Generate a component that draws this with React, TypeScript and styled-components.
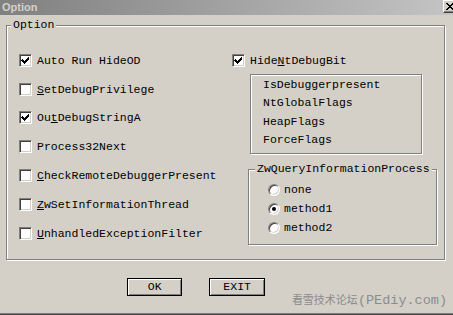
import React from "react";
import styled, { createGlobalStyle } from "styled-components";

const Global = createGlobalStyle`
  html, body { margin: 0; padding: 0; background: #d4d0c8; overflow: hidden; }
  #root { width: 453px; height: 315px; }
`;

const Window = styled.div`
  width: 453px;
  height: 315px;
  box-sizing: border-box;
  background: #d4d0c8;
  display: flex;
  flex-direction: column;
  overflow: hidden;
  border-bottom: 1px solid #404040;
  box-shadow: inset 0 -1px 0 #808080;
  font-family: "Liberation Mono", monospace;
  font-size: 11.5px;
  color: #000;
`;

const TitleBar = styled.div`
  height: 15px;
  flex: none;
  display: flex;
  align-items: flex-start;
  justify-content: space-between;
  background: linear-gradient(to right, #808080, #c4c4c4);
  padding-left: 2px;
  overflow: hidden;
`;

const TitleText = styled.span`
  font-family: "Liberation Sans", Arial, sans-serif;
  font-weight: bold;
  font-size: 11px;
  line-height: 14px;
  color: #d4d0c8;
`;

const CloseButton = styled.div`
  width: 14px;
  height: 13px;
  margin-right: -4px;
  box-sizing: border-box;
  background: #d4d0c8;
  border-top: 1px solid #fff;
  border-left: 1px solid #fff;
  border-right: 1px solid #404040;
  border-bottom: 1px solid #404040;
  box-shadow: inset -1px -1px 0 #808080;
  display: flex;
  align-items: center;
  justify-content: center;
`;

const Body = styled.div`
  flex: 1;
  display: flex;
  flex-direction: column;
  padding: 10px 0 0 6px;
`;

const GroupBox = styled.div<{ $w: number; $h: number }>`
  position: relative;
  box-sizing: border-box;
  width: ${(p) => p.$w}px;
  height: ${(p) => p.$h}px;
  border: 1px solid #808080;
  box-shadow: inset 1px 1px 0 #fff, 1px 1px 0 #fff;
`;

const GroupLabel = styled.span<{ $left: number }>`
  position: absolute;
  top: -8px;
  left: ${(p) => p.$left}px;
  padding: 0 2px;
  line-height: 13px;
  background: #d4d0c8;
  white-space: nowrap;
`;

const MainGrid = styled.div`
  display: grid;
  grid-template-columns: 213px 1fr;
  padding: 20px 0 0 12px;
`;

const LeftCol = styled.div`
  display: grid;
  grid-auto-rows: 28.8px;
`;

const RightCol = styled.div`
  display: flex;
  flex-direction: column;
`;

const CheckRow = styled.div<{ $h?: number }>`
  display: flex;
  align-items: center;
  gap: 5px;
  height: ${(p) => (p.$h ? `${p.$h}px` : "auto")};
  white-space: nowrap;
  line-height: 13px;
`;

const Check = styled.div`
  width: 13px;
  height: 13px;
  flex: none;
  box-sizing: border-box;
  background: #fff;
  border: 1px solid;
  border-color: #808080 #fff #fff #808080;
  box-shadow: inset 1px 1px 0 #404040, inset -1px -1px 0 #d4d0c8;
  display: flex;
  align-items: center;
  justify-content: center;
`;

const Key = styled.u`
  text-decoration: underline;
  text-underline-offset: 1px;
`;

const ListBox = styled.div`
  box-sizing: border-box;
  width: 172px;
  height: 80px;
  margin-left: 18px;
  border: 1px solid #808080;
  box-shadow: inset 1px 1px 0 #fff, 1px 1px 0 #fff;
  padding: 1px 0 0 12px;
`;

const ListItem = styled.div`
  line-height: 18.3px;
  white-space: nowrap;
`;

const RadioRows = styled.div`
  padding: 10px 0 0 19px;
`;

const RadioRow = styled.div`
  display: flex;
  align-items: center;
  gap: 4px;
  height: 19px;
`;

const Radio = styled.div`
  width: 12px;
  height: 12px;
  flex: none;
  box-sizing: border-box;
  border-radius: 50%;
  background: #fff;
  border: 1px solid;
  border-color: #808080 #fff #fff #808080;
  box-shadow: inset 1px 1px 0 #404040, inset -1px -1px 0 #d4d0c8;
  display: flex;
  align-items: center;
  justify-content: center;
`;

const Dot = styled.div`
  width: 4px;
  height: 4px;
  border-radius: 50%;
  background: #000;
`;

const RadioWrap = styled.div`
  margin: 15px 0 0 16px;
`;

const Footer = styled.div`
  display: flex;
  align-items: flex-start;
  padding: 18px 6px 0 121px;
  gap: 27px;
`;

const Button = styled.button`
  width: 56px;
  height: 18px;
  box-sizing: border-box;
  padding: 0;
  background: #d4d0c8;
  border: 1px solid #000;
  box-shadow: inset 1px 1px 0 #fff, inset -1px -1px 0 #808080;
  font-family: "Liberation Mono", monospace;
  font-size: 11.5px;
  color: #000;
  line-height: 14px;
`;

const Watermark = styled.div`
  margin-left: auto;
  margin-top: 14px;
  color: #8c8c8c;
  white-space: nowrap;
  line-height: 14px;
  display: flex;
  align-items: baseline;
`;

const WmCjk = styled.span`
  font-family: "Noto Sans CJK SC", sans-serif;
  font-size: 11px;
`;

const WmAscii = styled.span`
  font-family: "Liberation Mono", monospace;
  font-size: 13.5px;
`;

const CheckMark = () => (
  <svg width="9" height="9" viewBox="0 0 9 9" shapeRendering="crispEdges">
    <path
      d="M1 3h1v1h1v1h1v-1h1v-1h1v-1h1v-1h1v3h-1v1h-1v1h-1v1h-1v1h-1v-1h-1v-1h-1v-1h-1z"
      fill="#000"
    />
  </svg>
);

const CloseX = () => (
  <svg width="8" height="7" viewBox="0 0 8 7" shapeRendering="crispEdges">
    <path
      d="M0 0h2v1h1v1h2v-1h1v-1h2v1h-1v1h-1v1h-1v1h1v1h1v1h1v1h-2v-1h-1v-1h-2v1h-1v1h-2v-1h1v-1h1v-1h1v-1h-1v-1h-1v-1h-1z"
      fill="#000"
    />
  </svg>
);

type Item = { pre?: string; key?: string; post: string; checked?: boolean };

const leftItems: Item[] = [
  { post: "Auto Run HideOD", checked: true },
  { key: "S", post: "etDebugPrivilege" },
  { pre: "Ou", key: "t", post: "DebugStringA", checked: true },
  { post: "Process32Next" },
  { key: "C", post: "heckRemoteDebuggerPresent" },
  { key: "Z", post: "wSetInformationThread" },
  { key: "U", post: "nhandledExceptionFilter" },
];

const Label = ({ it }: { it: Item }) => (
  <span>
    {it.pre}
    {it.key && <Key>{it.key}</Key>}
    {it.post}
  </span>
);

export default function App() {
  return (
    <>
      <Global />
      <Window>
        <TitleBar>
          <TitleText>Option</TitleText>
          <CloseButton>
            <CloseX />
          </CloseButton>
        </TitleBar>
        <Body>
          <GroupBox $w={439} $h={235}>
            <GroupLabel $left={4}>Option</GroupLabel>
            <MainGrid>
              <LeftCol>
                {leftItems.map((it, i) => (
                  <CheckRow key={i}>
                    <Check>{it.checked && <CheckMark />}</Check>
                    <Label it={it} />
                  </CheckRow>
                ))}
              </LeftCol>
              <RightCol>
                <CheckRow $h={28}>
                  <Check>
                    <CheckMark />
                  </Check>
                  <Label it={{ pre: "Hide", key: "N", post: "tDebugBit" }} />
                </CheckRow>
                <ListBox>
                  <ListItem>IsDebuggerpresent</ListItem>
                  <ListItem>NtGlobalFlags</ListItem>
                  <ListItem>HeapFlags</ListItem>
                  <ListItem>ForceFlags</ListItem>
                </ListBox>
                <RadioWrap>
                  <GroupBox $w={189} $h={76}>
                    <GroupLabel $left={6}>ZwQueryInformationProcess</GroupLabel>
                    <RadioRows>
                      <RadioRow>
                        <Radio />
                        <span>none</span>
                      </RadioRow>
                      <RadioRow>
                        <Radio>
                          <Dot />
                        </Radio>
                        <span>method1</span>
                      </RadioRow>
                      <RadioRow>
                        <Radio />
                        <span>method2</span>
                      </RadioRow>
                    </RadioRows>
                  </GroupBox>
                </RadioWrap>
              </RightCol>
            </MainGrid>
          </GroupBox>
          <Footer>
            <Button>OK</Button>
            <Button>EXIT</Button>
            <Watermark>
              <WmCjk>看雪技术论坛</WmCjk>
              <WmAscii>(PEdiy.com)</WmAscii>
            </Watermark>
          </Footer>
        </Body>
      </Window>
    </>
  );
}
